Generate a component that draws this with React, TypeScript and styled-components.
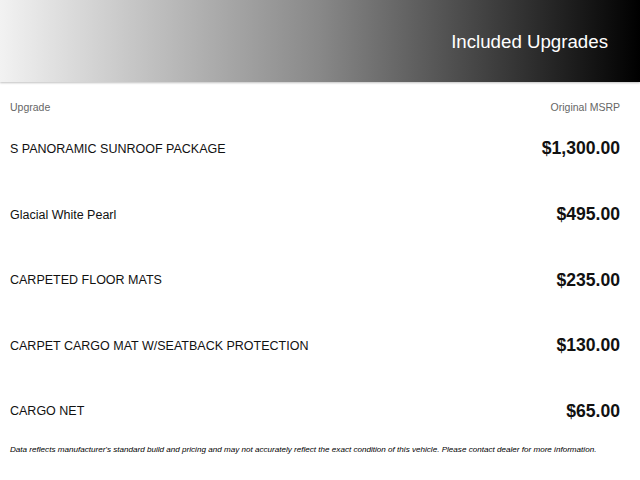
import React from 'react'
import styled, { createGlobalStyle } from 'styled-components'

const Global = createGlobalStyle`
    body {
        margin: 0;
        background: #fff;
        font-family: "Liberation Sans", Arial, sans-serif;
        color: #111;
    }
`

const Page = styled.div`
    width: 640px;
    height: 480px;
    overflow: hidden;
`

const Banner = styled.div`
    height: 82px;
    display: flex;
    align-items: center;
    justify-content: flex-end;
    padding-right: 32px;
    background: linear-gradient(to right, #f2f2f2 0%, #888 50%, #000 100%);
    box-shadow: 0 1px 2px rgba(0, 0, 0, 0.25);
`

const Title = styled.h1`
    margin: 2px 0 0;
    font-size: 18.7px;
    font-weight: normal;
    color: #fff;
`

const Table = styled.div`
    padding: 0 20px 0 10px;
`

const LabelRow = styled.div`
    display: flex;
    justify-content: space-between;
    padding-top: 18px;
    height: 16.2px;
    line-height: 14px;
    font-size: 10.5px;
    color: #666;
`

const Row = styled.div`
    display: flex;
    justify-content: space-between;
    align-items: center;
    height: 65.6px;
`

const Name = styled.span`
    font-size: 12.5px;
`

const Price = styled.span`
    font-size: 17.6px;
    font-weight: bold;
`

const Note = styled.p`
    margin: 0;
    padding: 0 10px;
    font-size: 8.1px;
    line-height: 12px;
    font-style: italic;
    color: #000;
`

const upgrades = [
    ['S PANORAMIC SUNROOF PACKAGE', '$1,300.00'],
    ['Glacial White Pearl', '$495.00'],
    ['CARPETED FLOOR MATS', '$235.00'],
    ['CARPET CARGO MAT W/SEATBACK PROTECTION', '$130.00'],
    ['CARGO NET', '$65.00'],
]

export default () => (
    <Page>
        <Global />
        <Banner>
            <Title>Included Upgrades</Title>
        </Banner>
        <Table>
            <LabelRow>
                <span>Upgrade</span>
                <span>Original MSRP</span>
            </LabelRow>
            {upgrades.map(([name, price]) => (
                <Row key={name}>
                    <Name>{name}</Name>
                    <Price>{price}</Price>
                </Row>
            ))}
        </Table>
        <Note>
            Data reflects manufacturer's standard build and pricing and may not accurately reflect the exact condition of this vehicle. Please contact dealer for more information.
        </Note>
    </Page>
)
